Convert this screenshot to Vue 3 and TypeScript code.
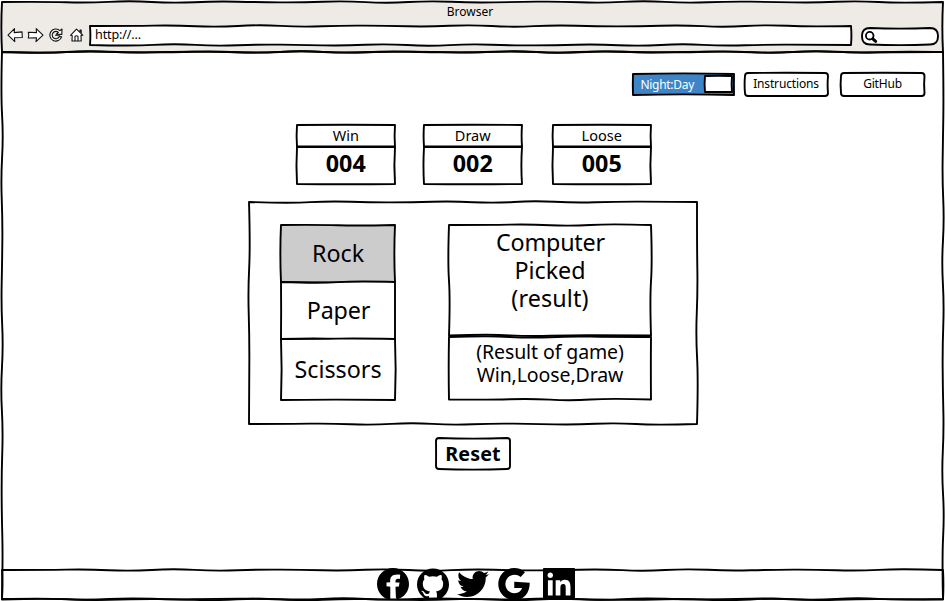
<script setup lang="ts">
import { h, type FunctionalComponent } from 'vue'

interface SketchProps {
  w: number
  h: number
  seed?: number
  r?: number
  stroke?: number
  fill?: string
}

function wobble(x1: number, y1: number, x2: number, y2: number, seed: number): string {
  const len = Math.hypot(x2 - x1, y2 - y1)
  const n = Math.max(2, Math.round(len / 42))
  const amp = len < 35 ? 0.8 : 1.3
  const nx = -(y2 - y1) / len
  const ny = (x2 - x1) / len
  const pts: [number, number][] = []
  for (let i = 1; i < n; i++) {
    const off = Math.sin(seed * 1.7 + i * 2.6) * amp
    pts.push([x1 + ((x2 - x1) * i) / n + nx * off, y1 + ((y2 - y1) * i) / n + ny * off])
  }
  let d = ''
  pts.forEach((p, i) => {
    const next = pts[i + 1]
    const end = next ? [(p[0] + next[0]) / 2, (p[1] + next[1]) / 2] : [x2, y2]
    d += ` Q${p[0].toFixed(2)} ${p[1].toFixed(2)} ${end[0].toFixed(2)} ${end[1].toFixed(2)}`
  })
  return d
}

function outline(w: number, hh: number, r: number, seed: number): string {
  return (
    `M${r} 0` + wobble(r, 0, w - r, 0, seed) +
    ` Q${w} 0 ${w} ${r}` + wobble(w, r, w, hh - r, seed + 1) +
    ` Q${w} ${hh} ${w - r} ${hh}` + wobble(w - r, hh, r, hh, seed + 2) +
    ` Q0 ${hh} 0 ${hh - r}` + wobble(0, hh - r, 0, r, seed + 3) +
    ` Q0 0 ${r} 0Z`
  )
}

const Sketch: FunctionalComponent<SketchProps> = (p) =>
  h('svg', { class: 'sketch', width: p.w, height: p.h, 'aria-hidden': 'true' }, [
    h('path', {
      d: outline(p.w, p.h, p.r ?? 0, p.seed ?? 1),
      fill: p.fill ?? 'none',
      stroke: '#000',
      'stroke-width': p.stroke ?? 1.9,
      'stroke-linejoin': 'round',
    }),
  ])
Sketch.props = ['w', 'h', 'seed', 'r', 'stroke', 'fill']

const scores = [
  { label: 'Win', value: '004', cls: 'win' },
  { label: 'Draw', value: '002', cls: 'draw' },
  { label: 'Loose', value: '005', cls: 'loose' },
]

const choices = [
  { name: 'Rock', height: 57, fill: '#cccccc', cls: 'rock' },
  { name: 'Paper', height: 57, fill: '#ffffff', cls: 'paper' },
  { name: 'Scissors', height: 61, fill: '#ffffff', cls: 'scissors' },
]

const socials = [
  { name: 'facebook', box: '0 0 32 32', d: 'M16 0C7 0 0 7 0 16c0 6.8 4 12.5 10 15L13.3 31.5V18.7L9.5 18.3V14.5L13.2 14.3C12.7 8.5 15.500 5.8 23.2 6.7L22.9 11C19.2 10.4 18.3 11.5 18.5 14.5L22.5 14.6 21.9 18.6 18.5 18.7 18.9 29.5 20 31.5C27 29.5 32 23.5 32 16 32 7 25 0 16 0Z' },
  { name: 'github', box: '0 0 24 24', d: 'M12 .297c-6.63 0-12 5.373-12 12 0 5.303 3.438 9.8 8.205 11.385.6.113.82-.258.82-.577 0-.285-.01-1.04-.015-2.04-3.338.724-4.042-1.61-4.042-1.61C4.422 18.07 3.633 17.7 3.633 17.7c-1.087-.744.084-.729.084-.729 1.205.084 1.838 1.236 1.838 1.236 1.07 1.835 2.809 1.305 3.495.998.108-.776.417-1.305.76-1.605-2.665-.3-5.466-1.332-5.466-5.93 0-1.31.465-2.38 1.235-3.22-.135-.303-.54-1.523.105-3.176 0 0 1.005-.322 3.3 1.23.96-.267 1.98-.399 3-.405 1.02.006 2.04.138 3 .405 2.28-1.552 3.285-1.23 3.285-1.23.645 1.653.24 2.873.12 3.176.765.84 1.23 1.91 1.23 3.22 0 4.61-2.805 5.625-5.475 5.92.42.36.81 1.096.81 2.22 0 1.606-.015 2.896-.015 3.286 0 .315.21.69.825.57C20.565 22.092 24 17.592 24 12.297c0-6.627-5.373-12-12-12' },
  { name: 'twitter', box: '0 0 512 512', d: 'M459.37 151.716c.325 4.548.325 9.097.325 13.645 0 138.72-105.583 298.558-298.558 298.558-59.452 0-114.68-17.219-161.137-47.106 8.447.974 16.568 1.299 25.34 1.299 49.055 0 94.213-16.568 130.274-44.832-46.132-.975-84.792-31.188-98.112-72.772 6.498.974 12.995 1.624 19.818 1.624 9.421 0 18.843-1.3 27.614-3.573-48.081-9.747-84.143-51.98-84.143-102.985v-1.299c13.969 7.797 30.214 12.67 47.431 13.319-28.264-18.843-46.781-51.005-46.781-87.391 0-19.492 5.197-37.36 14.294-52.954 51.655 63.675 129.3 105.258 216.365 109.807-1.624-7.797-2.599-15.918-2.599-24.04 0-57.828 46.782-104.934 104.934-104.934 30.213 0 57.502 12.67 76.67 33.137 23.715-4.548 46.456-13.32 66.599-25.34-7.798 24.366-24.366 44.833-46.132 57.827 21.117-2.273 41.584-8.122 60.426-16.243-14.292 20.791-32.161 39.308-52.628 54.253z' },
  { name: 'google', box: '0 8 488 496', d: 'M488 235C488 403.3 391.1 504 248 504 110.8 504 0 393.2 0 256S110.8 8 248 8c66.8 0 123 24.5 166.3 64.9l-67.5 74.9C258.5 72.6 110.3 126.6 110.3 256c0 80 60 142 138 142 78 0 110-45 120-80H248v-97z' },
  { name: 'linkedin', box: '0 32 448 448', d: 'M436 32H12C5 32 0 37 0 44v424c0 7 5 12 12 12h424c7 0 12-5 12-12V44c0-7-5-12-12-12zM135.4 416H69V202.2h66.5V416zm-33.2-243c-21.3 0-38.5-17.3-38.5-38.5S80.9 96 102.2 96c21.2 0 38.5 17.3 38.5 38.5 0 21.3-17.2 38.5-38.5 38.5zm282.1 243h-66.4V312c0-24.8-.5-56.7-34.5-56.7-34.6 0-39.9 27-39.9 54.9V416h-66.4V202.2h63.7v29.2h.9c8.9-16.8 30.6-34.5 62.9-34.5 67.2 0 79.7 44.3 79.7 101.9V416z' },
]
</script>

<template>
  <div class="window">
    <header class="chrome">
      <Sketch :w="941" :h="50" :seed="2" fill="#eeebe7" />
      <div class="title"><span>Browser</span></div>
      <div class="bar">
        <svg class="nav" width="80" height="18" viewBox="0 0 80 18" aria-hidden="true">
          <g fill="#fff" stroke="#111" stroke-width="1.1" stroke-linejoin="round">
            <path d="M1 9.2 7.5 2.7 7.2 6.6 15 5.9 15.3 11.5 7.4 11.8 7.8 15.6Z" />
            <path d="M36 9.2 29.2 2.7 29.5 6.6 21.3 6.2 21.8 9 21.3 12 29.5 11.8 29 15.6Z" />
            <path d="M63.5 9.3 69.5 3.2 75.8 9.2 74 9.4 74.2 15 65 15 65.2 9.5Z" />
            <path fill="none" d="M68 15V10.5q1.5-1.5 3 0V15M73 6V4h1.2v3" />
          </g>
          <g fill="none" stroke="#111" stroke-width="1.1" stroke-linecap="round" stroke-linejoin="round">
            <path fill="#fff" d="M53 4.7A6 6 0 1 0 54.6 10.8L52.3 10.5A3.7 3.7 0 1 1 51.4 6.3L49.3 8.2 54.8 8.4 55 3Z" />
            <path d="M48.6 9.3 52.4 9.2" />
          </g>
        </svg>
        <div class="url">
          <Sketch :w="761" :h="19" :seed="4" fill="#fff" />
          <span>http://...</span>
        </div>
        <div class="search">
          <Sketch :w="76" :h="16.5" :seed="3" :r="8" fill="#fff" />
          <svg class="lens" width="14" height="14" viewBox="0 0 14 14" aria-hidden="true">
            <circle cx="5.7" cy="5.7" r="3.8" fill="#fff" stroke="#000" stroke-width="1.8" />
            <path d="M8.8 8.8 11.7 11.3" stroke="#000" stroke-width="3" stroke-linecap="round" />
          </svg>
        </div>
      </div>
    </header>

    <main class="page">
      <Sketch class="frame" :w="941" :h="547" :seed="7" />
      <nav class="actions">
        <button class="btn toggle">
          <Sketch :w="101" :h="21" :seed="5" fill="#3d85c6" />
          <span>Night:Day</span>
          <i class="knob"><Sketch :w="27" :h="16" :seed="2" fill="#fff" /></i>
        </button>
        <button class="btn instructions">
          <Sketch :w="83" :h="23" :seed="2" :r="3" fill="#fff" />
          <span>Instructions</span>
        </button>
        <button class="btn github">
          <Sketch :w="83.5" :h="23" :seed="2" :r="3" fill="#fff" />
          <span>GitHub</span>
        </button>
      </nav>

      <section class="scores">
        <div v-for="s in scores" :key="s.label" class="score" :class="s.cls">
          <div class="label"><Sketch :w="98" :h="21.5" :seed="2" fill="#fff" /><span>{{ s.label }}</span></div>
          <div class="value"><Sketch :w="98" :h="37" :seed="6" fill="#fff" /><span>{{ s.value }}</span></div>
        </div>
      </section>

      <section class="board">
        <Sketch :w="448" :h="222" :seed="3" fill="#fff" />
        <div class="choices">
          <div v-for="(c, i) in choices" :key="c.name" class="choice" :class="c.cls">
            <Sketch :w="114" :h="c.height" :seed="i + 2" :fill="c.fill" />
            <span>{{ c.name }}</span>
          </div>
        </div>
        <div class="results">
          <div class="picked">
            <Sketch :w="202" :h="110.5" :seed="4" fill="#fff" />
            <span class="computer">Computer</span>
            <span class="pick">Picked</span>
            <span class="res">(result)</span>
          </div>
          <div class="outcome">
            <Sketch :w="202" :h="62.5" :seed="5" fill="#fff" />
            <span class="game">(Result of game)</span>
            <span class="options">Win,Loose,Draw</span>
          </div>
        </div>
      </section>

      <button class="reset">
        <Sketch :w="74" :h="31" :seed="3" :r="3" fill="#fff" />
        <span>Reset</span>
      </button>
    </main>

    <footer class="foot">
      <Sketch :w="941" :h="29.5" :seed="4" />
      <a v-for="s in socials" :key="s.name" :class="s.name">
        <svg width="32" height="32" :viewBox="s.box" aria-hidden="true"><path :d="s.d" /></svg>
      </a>
    </footer>
  </div>
</template>

<style>
body {
  background: #fff;
}
.sketch {
  position: absolute;
  left: 0;
  top: 0;
  overflow: visible;
  pointer-events: none;
}
</style>

<style scoped>
.window {
  width: 945px;
  height: 601px;
  box-sizing: border-box;
  padding: 2px;
  overflow: hidden;
  display: flex;
  flex-direction: column;
  font-family: "Noto Sans", "Open Sans", sans-serif;
  color: #000;
}
span {
  position: relative;
  white-space: nowrap;
}
button {
  border: 0;
  padding: 0;
  margin: 0;
  background: none;
  font: inherit;
  color: inherit;
}
.chrome {
  position: relative;
  height: 50px;
  flex: none;
}
.title {
  height: 24px;
  font-size: 12px;
  line-height: 20px;
  text-align: center;
  padding-right: 5px;
}
.bar {
  display: flex;
  padding-left: 5px;
}
.nav {
  position: relative;
  width: 80px;
}
.url {
  position: relative;
  width: 762px;
  height: 19px;
  margin-left: 3px;
  padding-left: 5px;
  box-sizing: border-box;
  font-size: 12.6px;
  letter-spacing: -0.15px;
  line-height: 17px;
}
.search {
  position: relative;
  width: 77px;
  height: 17px;
  margin: 2px 0 0 10px;
}
.lens {
  position: relative;
  display: block;
  margin: 2px 0 0 2px;
}
.page {
  position: relative;
  height: 517.5px;
  flex: none;
  display: flex;
  flex-direction: column;
  align-items: center;
}
.actions {
  align-self: stretch;
  display: flex;
  justify-content: flex-end;
  padding: 21px 18.5px 0 0;
  height: 23px;
  font-size: 12px;
  line-height: 21px;
}
.btn {
  position: relative;
  height: 23px;
  display: flex;
  justify-content: center;
}
.toggle {
  width: 101px;
  height: 21px;
  margin: 1px 11px 0 0;
  justify-content: space-between;
  padding: 0 2px 0 8px;
  box-sizing: border-box;
  color: #fff;
  letter-spacing: -0.3px;
}
.knob {
  position: relative;
  width: 27px;
  height: 16px;
  margin-top: 2px;
}
.instructions {
  width: 83px;
  margin-right: 13px;
  letter-spacing: -0.15px;
}
.github {
  width: 84px;
  letter-spacing: -0.2px;
}
.scores {
  display: flex;
  gap: 30px;
  margin: 29px 0 0 3px;
}
.score {
  width: 98px;
  text-align: center;
}
.score.win {
  margin-right: -1.5px;
}
.score.draw {
  margin-right: 1px;
}
.label,
.value {
  position: relative;
  box-sizing: border-box;
}
.win .label,
.win .value {
  padding-right: 1px;
}
.label {
  height: 21.5px;
  font-size: 14.5px;
  line-height: 21px;
}
.value {
  height: 37.5px;
  font-size: 23.3px;
  font-weight: 700;
  line-height: 33px;
}
.board {
  position: relative;
  width: 448px;
  height: 222px;
  margin-top: 18px;
  margin-left: 1px;
  box-sizing: border-box;
  padding: 23px 46px 0 32px;
  display: flex;
  justify-content: space-between;
}
.choices {
  width: 114px;
}
.choice {
  position: relative;
  height: 57px;
  text-align: center;
  font-size: 23.3px;
  line-height: 57px;
}
.choice.paper {
  letter-spacing: -0.2px;
  text-indent: 1px;
}
.choice.scissors {
  height: 61px;
  line-height: 60px;
}
.results {
  width: 202px;
  text-align: center;
}
.picked,
.outcome {
  position: relative;
  display: flex;
  flex-direction: column;
  align-items: center;
}
.picked {
  height: 111px;
  margin-bottom: 1px;
  padding-top: 3px;
  box-sizing: border-box;
  font-size: 23.3px;
  line-height: 28px;
}
.computer {
  letter-spacing: -0.2px;
  padding-left: 1px;
}
.res {
  letter-spacing: 0.15px;
}
.outcome {
  height: 63px;
  padding-top: 3px;
  box-sizing: border-box;
  font-size: 19.5px;
  line-height: 23px;
  letter-spacing: -0.1px;
}
.reset {
  position: relative;
  width: 74px;
  height: 31px;
  margin-top: 14px;
  margin-left: 1px;
  text-align: center;
  font-size: 19.7px;
  letter-spacing: 0.1px;
  font-weight: 700;
  line-height: 28px;
}
.foot {
  position: relative;
  height: 30px;
  flex: none;
  display: flex;
  justify-content: center;
  gap: 8px;
  padding-left: 7.5px;
}
.foot a {
  position: relative;
  width: 32px;
  height: 32px;
  margin-top: -1.5px;
}
.foot svg {
  display: block;
}
.foot .google {
  margin-left: 1px;
}
.foot .linkedin {
  margin-left: 5px;
}
</style>
